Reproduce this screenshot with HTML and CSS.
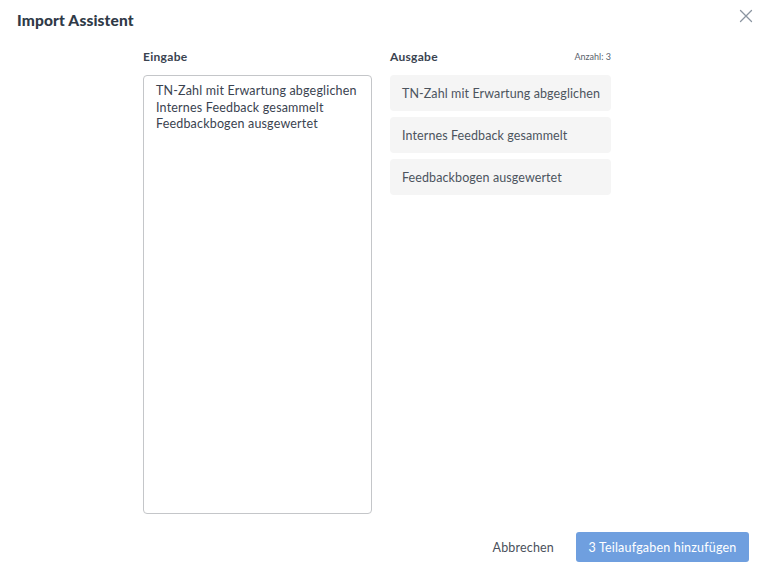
FILE: index.html
```html
<!DOCTYPE html>
<html lang="de">
<head>
<meta charset="utf-8">
<link rel="stylesheet" href="styles.css">
</head>
<body>
<div class="modal">
  <header class="head">
    <h1 class="title">Import Assistent</h1>
    <button class="close" aria-label="Schließen">
      <svg width="14" height="14" viewBox="0 0 14 14"><path d="M1.5 1.5 L12.5 12.5 M12.5 1.5 L1.5 12.5" stroke="#8b95a1" stroke-width="1.3" fill="none" stroke-linecap="round"/></svg>
    </button>
  </header>
  <main class="body">
    <section class="col col-in">
      <div class="label-row"><span class="label">Eingabe</span></div>
      <div class="textarea">TN-Zahl mit Erwartung abgeglichen
Internes Feedback gesammelt
Feedbackbogen ausgewertet</div>
    </section>
    <section class="col col-out">
      <div class="label-row"><span class="label">Ausgabe</span><span class="count">Anzahl: 3</span></div>
      <ul class="items">
        <li class="item">TN-Zahl mit Erwartung abgeglichen</li>
        <li class="item">Internes Feedback gesammelt</li>
        <li class="item">Feedbackbogen ausgewertet</li>
      </ul>
    </section>
  </main>
  <footer class="foot">
    <button class="btn btn-cancel">Abbrechen</button>
    <button class="btn btn-primary">3 Teilaufgaben hinzufügen</button>
  </footer>
</div>
</body>
</html>
```
FILE: styles.css
```css
* { box-sizing: border-box; }
html, body { margin: 0; padding: 0; background: #fff; }
body { font-family: Lato, "Open Sans", sans-serif; color: #3a4350; width: 763px; height: 572px; overflow: hidden; }
.modal { display: flex; flex-direction: column; height: 572px; }
.head { display: flex; justify-content: space-between; align-items: flex-start; padding: 11px 10px 0 17px; height: 48px; }
.title { margin: 0; font-size: 15.5px; font-weight: 900; letter-spacing: 0.15px; color: #2f3a47; line-height: 18px; }
.close { border: 0; background: none; padding: 0; margin-top: -2px; width: 14px; height: 14px; cursor: pointer; }
.close svg { display: block; }
.body { display: flex; gap: 18px; padding-left: 143px; }
.col-in { width: 229px; }
.col-out { width: 221px; }
.label-row { display: flex; justify-content: space-between; align-items: center; height: 16px; margin-bottom: 11px; }
.label { font-size: 12px; font-weight: 700; letter-spacing: 0.3px; color: #3a4350; }
.count { font-size: 9px; color: #5a626d; }
.textarea { height: 439px; border: 1px solid #c4c6c9; border-radius: 4px; padding: 7px 8px 5px 12px; white-space: pre; overflow: hidden; font-size: 12.5px; letter-spacing: 0.18px; line-height: 16.5px; color: #3a4350; }
.items { list-style: none; margin: 0; padding: 0; display: flex; flex-direction: column; gap: 6px; margin-top: 2px; }
.item { height: 36px; background: #f5f5f5; border-radius: 4px; padding: 0 8px 0 12px; display: flex; align-items: center; white-space: nowrap; font-size: 12.5px; letter-spacing: 0.1px; color: #4c545e; }
.foot { margin-top: auto; display: flex; justify-content: flex-end; align-items: center; gap: 22px; padding: 0 14px 10px 0; }
.btn { font-family: inherit; font-size: 12.5px; letter-spacing: 0.18px; border: 0; cursor: pointer; white-space: nowrap; }
.btn-cancel { background: none; color: #4a515b; padding: 0; }
.btn-primary { background: #6f9fdf; color: #fff; height: 30px; width: 173px; border-radius: 3px; }
```
